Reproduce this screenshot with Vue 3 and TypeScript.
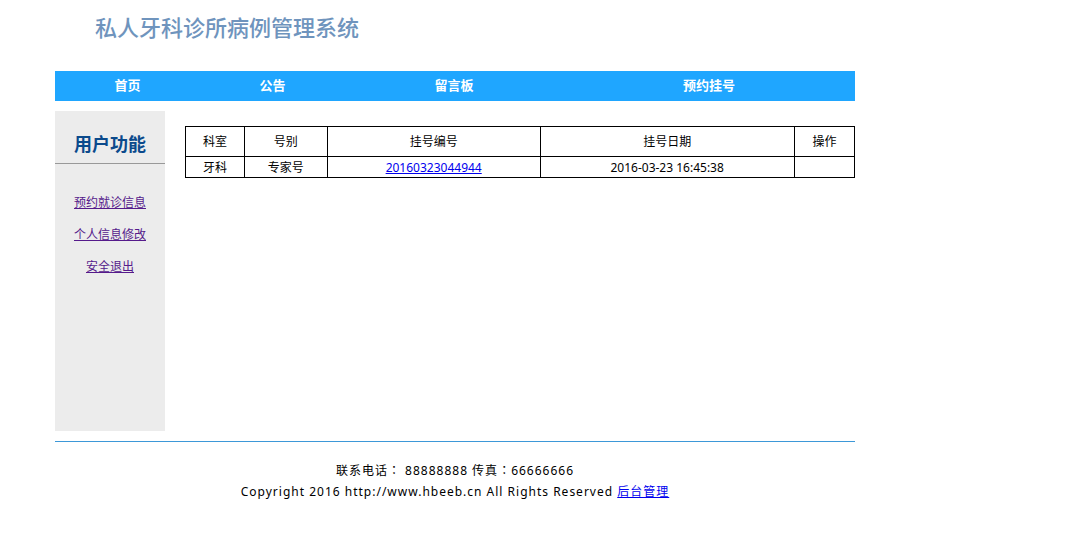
<script setup lang="ts">
interface Appointment {
  department: string
  type: string
  number: string
  date: string
}

const navItems: string[] = ['首页', '公告', '留言板', '预约挂号']
const menuItems: string[] = ['预约就诊信息', '个人信息修改', '安全退出']
const appointments: Appointment[] = [
  { department: '牙科', type: '专家号', number: '20160323044944', date: '2016-03-23 16:45:38' },
]
</script>

<template>
  <div class="page">
    <header class="banner">
      <h1>私人牙科诊所病例管理系统</h1>
    </header>

    <nav class="nav">
      <a v-for="item in navItems" :key="item" href="#">{{ item }}</a>
    </nav>

    <div class="body">
      <aside class="sidebar">
        <h2>用户功能</h2>
        <ul>
          <li v-for="item in menuItems" :key="item"><a href="#">{{ item }}</a></li>
        </ul>
      </aside>

      <main class="content">
        <table>
          <colgroup>
            <col class="col-dept" />
            <col class="col-type" />
            <col class="col-number" />
            <col class="col-date" />
            <col class="col-action" />
          </colgroup>
          <thead>
            <tr>
              <th>科室</th>
              <th>号别</th>
              <th>挂号编号</th>
              <th>挂号日期</th>
              <th>操作</th>
            </tr>
          </thead>
          <tbody>
            <tr v-for="row in appointments" :key="row.number">
              <td>{{ row.department }}</td>
              <td>{{ row.type }}</td>
              <td><a href="#">{{ row.number }}</a></td>
              <td>{{ row.date }}</td>
              <td></td>
            </tr>
          </tbody>
        </table>
      </main>
    </div>

    <footer class="footer">
      <p>联系电话<span class="colon">：</span> 88888888 传真<span class="colon">：</span>66666666</p>
      <p>Copyright 2016 http://www.hbeeb.cn All Rights Reserved <a href="#">后台管理</a></p>
    </footer>
  </div>
</template>

<style>
body {
  background: #fff;
}
</style>

<style scoped>
.page {
  max-width: 800px;
  margin-left: 55px;
  font-family: "Noto Sans", "Noto Sans CJK SC", sans-serif;
  font-size: 12px;
  line-height: 20px;
  color: #000;
}

.banner {
  padding: 14px 40px 27px;
}

.banner h1 {
  margin: 0;
  font-family: "Liberation Serif", "Noto Sans CJK SC", serif;
  font-size: 22px;
  font-weight: 500;
  line-height: 30px;
  color: #6f94bd;
}

.nav {
  display: grid;
  grid-template-columns: 145fr 145fr 218fr 292fr;
  background: #1fa6ff;
}

.nav a {
  padding-bottom: 2px;
  font-size: 13px;
  font-weight: bold;
  line-height: 28px;
  text-align: center;
  text-decoration: none;
  color: #fff;
}

.body {
  display: flex;
  gap: 20px;
  margin: 10px 0;
}

.sidebar {
  flex: 0 0 110px;
  min-height: 320px;
  background: #ececec;
  text-align: center;
}

.sidebar h2 {
  margin: 0;
  padding: 18px 0 4px;
  border-bottom: 1px solid #999;
  font-size: 18px;
  line-height: 30px;
  color: #0b4a8c;
}

.sidebar ul {
  margin: 0;
  padding: 23px 0 0;
  list-style: none;
}

.sidebar li {
  line-height: 32px;
}

.sidebar a {
  color: #551a8b;
}

.content {
  flex: 1;
  padding-top: 15px;
}

table {
  width: 100%;
  table-layout: fixed;
  border-collapse: collapse;
}

.col-dept {
  width: 8.8%;
}

.col-type {
  width: 12.4%;
}

.col-number {
  width: 31.8%;
}

.col-date {
  width: 38%;
}

.col-action {
  width: 9%;
}

th,
td {
  padding: 0;
  border: 1px solid #000;
  font-weight: normal;
  text-align: center;
}

th {
  height: 29px;
}

td {
  padding-top: 2px;
  line-height: 18px;
}

td a,
.footer a {
  color: #0000ee;
}

.footer {
  padding-top: 17px;
  border-top: 1px solid #3d98d8;
  text-align: center;
  letter-spacing: 1px;
}

.footer p {
  margin: 0;
  line-height: 21px;
}

.colon {
  font-family: "Noto Sans CJK TC", sans-serif;
}
</style>
